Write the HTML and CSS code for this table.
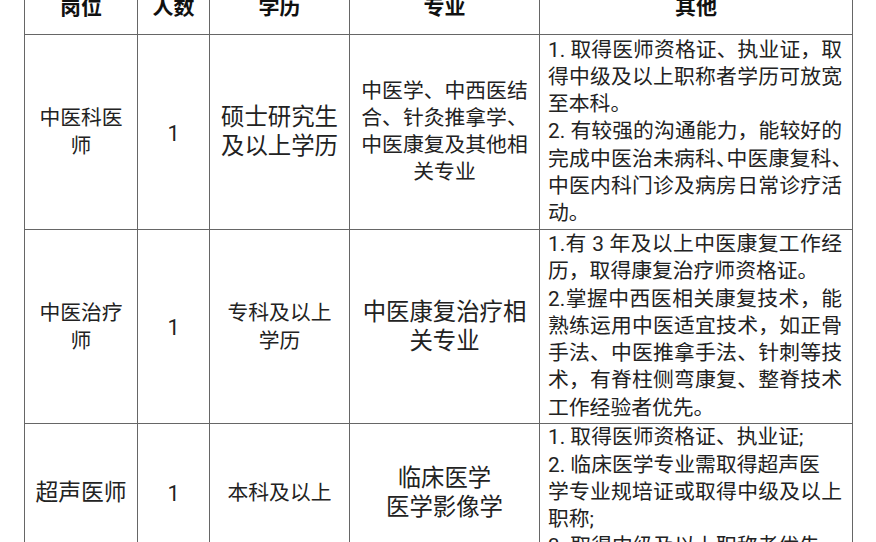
FILE: index.html
```html
<!DOCTYPE html>
<html lang="zh-CN">
<head>
<meta charset="utf-8">
<title>岗位表</title>
<link rel="stylesheet" href="styles.css">
</head>
<body>
<div class="sheet">
  <div class="c h">岗位</div>
  <div class="c h">人数</div>
  <div class="c h">学历</div>
  <div class="c h">专业</div>
  <div class="c h">其他</div>

  <div class="c">中医科医<br>师</div>
  <div class="c num">1</div>
  <div class="c big">硕士研究生<br>及以上学历</div>
  <div class="c tall">中医学、中西医结<br>合、针灸推拿学、<br>中医康复及其他相<br>关专业</div>
  <div class="c other">
    <div class="ln">1. 取得医师资格证、执业证，取</div>
    <div class="ln">得中级及以上职称者学历可放宽</div>
    <div class="ln e">至本科。</div>
    <div class="ln">2. 有较强的沟通能力，能较好的</div>
    <div class="ln">完成中医治未病科<span class="hw">、</span>中医康复科<span class="hw">、</span></div>
    <div class="ln">中医内科门诊及病房日常诊疗活</div>
    <div class="ln e">动。</div>
  </div>

  <div class="c">中医治疗<br>师</div>
  <div class="c num">1</div>
  <div class="c">专科及以上<br>学历</div>
  <div class="c big">中医康复治疗相<br>关专业</div>
  <div class="c other">
    <div class="ln">1.有 3 年及以上中医康复工作经</div>
    <div class="ln e">历，取得康复治疗师资格证。</div>
    <div class="ln">2.掌握中西医相关康复技术，能</div>
    <div class="ln">熟练运用中医适宜技术，如正骨</div>
    <div class="ln">手法、中医推拿手法、针刺等技</div>
    <div class="ln">术，有脊柱侧弯康复、整脊技术</div>
    <div class="ln e">工作经验者优先。</div>
  </div>

  <div class="c wide">超声医师</div>
  <div class="c num">1</div>
  <div class="c">本科及以上</div>
  <div class="c big">临床医学<br>医学影像学</div>
  <div class="c other">
    <div class="ln e">1. 取得医师资格证、执业证;</div>
    <div class="ln e">2. 临床医学专业需取得超声医</div>
    <div class="ln">学专业规培证或取得中级及以上</div>
    <div class="ln e">职称;</div>
    <div class="ln e">3. 取得中级及以上职称者优先</div>
  </div>
</div>
</body>
</html>
```

FILE: styles.css
```css
html, body {
  margin: 0;
  padding: 0;
  background: #ffffff;
}

body {
  font-family: Roboto, "Noto Sans CJK SC", "Noto Sans", sans-serif;
  color: #222222;
  overflow: hidden;
}

.sheet {
  display: grid;
  grid-template-columns: 113px 72px 140px 190px 313px;
  grid-template-rows: 56px 195px 194px 138px;
  width: max-content;
  margin: -22px 0 0 24px;
  border-top: 1px solid #666666;
  border-left: 1px solid #666666;
}

.c {
  box-sizing: border-box;
  border-right: 1px solid #666666;
  border-bottom: 1px solid #666666;
  display: flex;
  align-items: center;
  justify-content: center;
  text-align: center;
  font-size: 20.8px;
  line-height: 28px;
}

.h {
  font-weight: 700;
  color: #111111;
  font-size: 21px;
}

.big {
  font-size: 23.4px;
  line-height: 29px;
}

.wide {
  font-size: 22.8px;
}

.tall {
  line-height: 27px;
}

.num {
  font-size: 21.5px;
  padding-top: 3px;
}

.other {
  flex-direction: column;
  align-items: stretch;
  justify-content: center;
  text-align: left;
  padding: 0 10px 0 8px;
  line-height: 27.2px;
}

.ln {
  text-align: justify;
  text-align-last: justify;
}

.ln.e {
  text-align-last: left;
}

.hw {
  letter-spacing: -0.5em;
}
```
